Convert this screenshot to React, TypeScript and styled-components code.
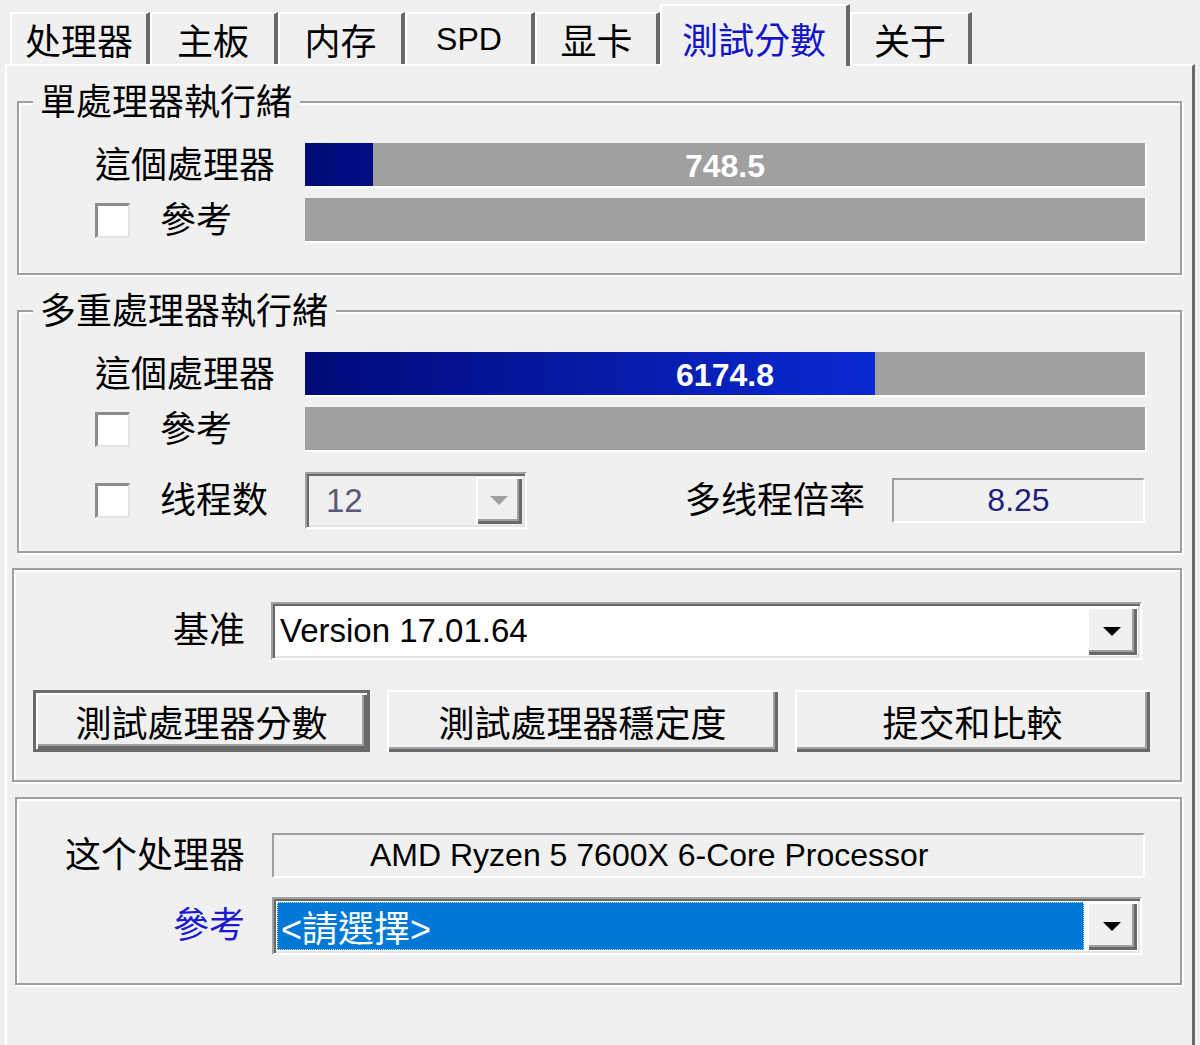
import styled, { createGlobalStyle, css } from 'styled-components';

const GlobalStyle = createGlobalStyle`
  html, body {
    margin: 0;
    padding: 0;
    background: #f0f0f0;
  }
  body {
    font-family: "Liberation Sans", "Noto Sans CJK TC", "Noto Sans CJK SC", sans-serif;
    font-size: 36px;
    color: #000;
  }
`;

const raised = css`
  background: #f0f0f0;
  box-shadow: inset 2px 2px 0 #fff, inset -3px -3px 0 #696969, inset -5px -5px 0 #a0a0a0;
`;

const Window = styled.div`
  width: 1200px;
  height: 1045px;
  overflow: hidden;
  display: flex;
  flex-direction: column;
  background: #f0f0f0;
`;

const TabBar = styled.div`
  display: flex;
  align-items: flex-end;
  height: 64px;
  padding-left: 10px;
  position: relative;
  z-index: 1;
`;

const Tab = styled.div<{ $active?: boolean; $w: number }>`
  width: ${(p) => p.$w}px;
  height: ${(p) => (p.$active ? 62 : 52)}px;
  margin-bottom: ${(p) => (p.$active ? -2 : 0)}px;
  padding-top: ${(p) => (p.$active ? 4 : 0)}px;
  box-sizing: border-box;
  background: #f0f0f0;
  border-top: 2px solid #fff;
  border-left: 2px solid #fff;
  border-right: 4px solid #696969;
  display: flex;
  align-items: center;
  justify-content: center;
  font-size: 36px;
  color: ${(p) => (p.$active ? '#1414c8' : '#000')};
`;

const LatinTab = styled.span`
  font-size: 32px;
`;

const Panel = styled.div`
  flex: 1;
  margin: 0 5px;
  border-top: 2px solid #fff;
  border-left: 2px solid #fff;
  border-right: 3px solid #696969;
  display: flex;
  flex-direction: column;
`;

const Group = styled.fieldset<{ $left?: number }>`
  margin: 15px 10px 0 ${(p) => p.$left ?? 10}px;
  padding: 0;
  min-width: 0;
  border: 2px solid #a0a0a0;
  box-shadow: inset 2px 2px 0 #fff, 2px 2px 0 #fff;
`;

const Legend = styled.legend`
  margin-left: 14px;
  padding: 2px 8px 0 7px;
  font-size: 36px;
  line-height: 40px;
  background: #f0f0f0;
`;

const Rows = styled.div<{ $pad: string }>`
  display: flex;
  flex-direction: column;
  gap: 10px;
  padding: ${(p) => p.$pad};
`;

const Row = styled.div<{ $h?: number; $top?: number }>`
  display: grid;
  grid-template-columns: 210px 1fr;
  align-items: center;
  height: ${(p) => p.$h ?? 45}px;
  margin-top: ${(p) => p.$top ?? 0}px;
`;

const Label = styled.span`
  font-size: 36px;
  line-height: 40px;
  white-space: nowrap;
`;

const CheckLabel = styled.div`
  display: flex;
  align-items: center;
  gap: 30px;
`;

const Checkbox = styled.span`
  width: 35px;
  height: 35px;
  box-sizing: border-box;
  background: #fff;
  border-top: 3px solid #8c8c8c;
  border-left: 3px solid #8c8c8c;
  border-right: 2px solid #e3e3e3;
  border-bottom: 2px solid #e3e3e3;
`;

const Bar = styled.div`
  position: relative;
  height: 45px;
  box-sizing: border-box;
  background: #a0a0a0;
  border-right: 2px solid #fff;
  border-bottom: 2px solid #fff;
  overflow: hidden;
  display: flex;
  align-items: center;
  justify-content: center;
`;

const Fill = styled.div`
  position: absolute;
  left: 0;
  top: 0;
  bottom: 0;
  background-image: linear-gradient(90deg, #000a78, #1038ff);
  background-repeat: no-repeat;
`;

const Score = styled.span`
  position: relative;
  top: 2px;
  color: #fff;
  font-weight: bold;
  font-size: 32px;
`;

const ThreadCell = styled.div`
  display: flex;
  align-items: center;
  padding-right: 2px;
`;

const Spacer = styled.div`
  flex: 1;
`;

const RatioLabel = styled(Label)`
  margin-right: 27px;
`;

const ReadField = styled.div<{ $w?: number; $center?: boolean; $pad?: number; $color?: string }>`
  ${(p) => (p.$w ? `width: ${p.$w}px;` : '')}
  height: 45px;
  box-sizing: border-box;
  background: #f0f0f0;
  border-top: 2px solid #a0a0a0;
  border-left: 2px solid #a0a0a0;
  border-right: 2px solid #fff;
  border-bottom: 2px solid #fff;
  display: flex;
  align-items: center;
  justify-content: ${(p) => (p.$center ? 'center' : 'flex-start')};
  padding-left: ${(p) => p.$pad ?? 0}px;
  font-size: 32px;
  color: ${(p) => p.$color ?? '#000'};
  white-space: nowrap;
`;

const Combo = styled.div<{ $w?: number; $h?: number; $disabled?: boolean; $mr?: number }>`
  display: flex;
  box-sizing: border-box;
  ${(p) => (p.$w ? `width: ${p.$w}px;` : '')}
  height: ${(p) => p.$h ?? 58}px;
  margin-right: ${(p) => p.$mr ?? 0}px;
  padding: 3px;
  background: ${(p) => (p.$disabled ? '#f0f0f0' : '#fff')};
  border-top: 2px solid #a0a0a0;
  border-left: 2px solid #a0a0a0;
  border-right: 2px solid #fff;
  border-bottom: 2px solid #fff;
  box-shadow: inset 2px 2px 0 #696969, inset -2px -2px 0 #e3e3e3;
`;

const ComboText = styled.div<{ $selected?: boolean; $disabled?: boolean }>`
  flex: 1;
  display: flex;
  align-items: center;
  padding-left: ${(p) => (p.$disabled ? 16 : 4)}px;
  margin-right: 3px;
  font-size: 33px;
  white-space: nowrap;
  color: ${(p) => (p.$selected ? '#fff' : p.$disabled ? '#5a5a78' : '#000')};
  background: ${(p) => (p.$selected ? '#0078d7' : 'transparent')};
  ${(p) => p.$selected && 'outline: 1px dotted #cfe6fa; outline-offset: -1px; font-size: 36px;'}
`;

const ComboButton = styled.div<{ $w?: number }>`
  ${raised}
  width: ${(p) => p.$w ?? 50}px;
  display: flex;
  align-items: center;
  justify-content: center;
`;

const Arrow = styled.span<{ $disabled?: boolean }>`
  width: 0;
  height: 0;
  border-left: 9px solid transparent;
  border-right: 9px solid transparent;
  border-top: 9px solid ${(p) => (p.$disabled ? '#a0a0a0' : '#000')};
`;

const Body = styled.div<{ $pad: string; $gap: number }>`
  display: flex;
  flex-direction: column;
  gap: ${(p) => p.$gap}px;
  padding: ${(p) => p.$pad};
`;

const FieldRow = styled.div<{ $label: number; $gap: number }>`
  display: grid;
  grid-template-columns: ${(p) => p.$label}px 1fr;
  column-gap: ${(p) => p.$gap}px;
  align-items: center;
`;

const RowLabel = styled.span<{ $blue?: boolean }>`
  text-align: right;
  font-size: 36px;
  line-height: 40px;
  white-space: nowrap;
  color: ${(p) => (p.$blue ? '#1a1ad0' : '#000')};
`;

const Buttons = styled.div`
  display: grid;
  grid-template-columns: 337px 391px 355px;
  column-gap: 17px;
  padding-left: 19px;
`;

const Button = styled.button<{ $default?: boolean }>`
  ${raised}
  height: 62px;
  box-sizing: border-box;
  border: ${(p) => (p.$default ? '3px solid #6a6a6a' : '0')};
  font-family: inherit;
  font-size: 36px;
  color: #000;
  padding: 0;
  cursor: default;
`;

const tabs = [
  { label: '处理器', w: 140 },
  { label: '主板', w: 128 },
  { label: '内存', w: 127 },
  { label: 'SPD', w: 130, latin: true },
  { label: '显卡', w: 125 },
  { label: '測試分數', w: 190, active: true },
  { label: '关于', w: 122 },
];

const ScoreBar = ({ value, pct }: { value?: string; pct?: number }) => (
  <Bar>
    {pct ? (
      <Fill style={{ width: `${pct}%`, backgroundSize: `${10000 / pct}% 100%` }} />
    ) : null}
    {value ? <Score>{value}</Score> : null}
  </Bar>
);

const App = () => {
  return (
    <Window>
      <GlobalStyle />
      <TabBar>
        {tabs.map((t) => (
          <Tab key={t.label} $w={t.w} $active={t.active}>
            {t.latin ? <LatinTab>{t.label}</LatinTab> : t.label}
          </Tab>
        ))}
      </TabBar>
      <Panel>
        <Group>
          <Legend>單處理器執行緒</Legend>
          <Rows $pad="20px 33px 30px 76px">
            <Row>
              <Label>這個處理器</Label>
              <ScoreBar value="748.5" pct={8.1} />
            </Row>
            <Row>
              <CheckLabel>
                <Checkbox />
                <Label>參考</Label>
              </CheckLabel>
              <ScoreBar />
            </Row>
          </Rows>
        </Group>

        <Group>
          <Legend>多重處理器執行緒</Legend>
          <Rows $pad="20px 33px 22px 76px">
            <Row>
              <Label>這個處理器</Label>
              <ScoreBar value="6174.8" pct={67.8} />
            </Row>
            <Row>
              <CheckLabel>
                <Checkbox />
                <Label>參考</Label>
              </CheckLabel>
              <ScoreBar />
            </Row>
            <Row $h={57} $top={10}>
              <CheckLabel>
                <Checkbox />
                <Label>线程数</Label>
              </CheckLabel>
              <ThreadCell>
                <Combo $w={222} $h={57} $disabled>
                  <ComboText $disabled>12</ComboText>
                  <ComboButton $w={46}>
                    <Arrow $disabled />
                  </ComboButton>
                </Combo>
                <Spacer />
                <RatioLabel>多线程倍率</RatioLabel>
                <ReadField $w={253} $center $color="#20207a">
                  8.25
                </ReadField>
              </ThreadCell>
            </Row>
          </Rows>
        </Group>

        <Group $left={5}>
          <Body $pad="32px 38px 28px 0" $gap={30}>
            <FieldRow $label={231} $gap={26}>
              <RowLabel>基准</RowLabel>
              <Combo>
                <ComboText>Version 17.01.64</ComboText>
                <ComboButton>
                  <Arrow />
                </ComboButton>
              </Combo>
            </FieldRow>
            <Buttons>
              <Button $default>測試處理器分數</Button>
              <Button>測試處理器穩定度</Button>
              <Button>提交和比較</Button>
            </Buttons>
          </Body>
        </Group>

        <Group $left={8}>
          <Body $pad="34px 35px 28px 0" $gap={19}>
            <FieldRow $label={228} $gap={27}>
              <RowLabel>这个处理器</RowLabel>
              <ReadField $pad={96}>AMD Ryzen 5 7600X 6-Core Processor</ReadField>
            </FieldRow>
            <FieldRow $label={228} $gap={27}>
              <RowLabel $blue>參考</RowLabel>
              <Combo $mr={3}>
                <ComboText $selected>&lt;請選擇&gt;</ComboText>
                <ComboButton>
                  <Arrow />
                </ComboButton>
              </Combo>
            </FieldRow>
          </Body>
        </Group>
      </Panel>
    </Window>
  );
};

export default App;
